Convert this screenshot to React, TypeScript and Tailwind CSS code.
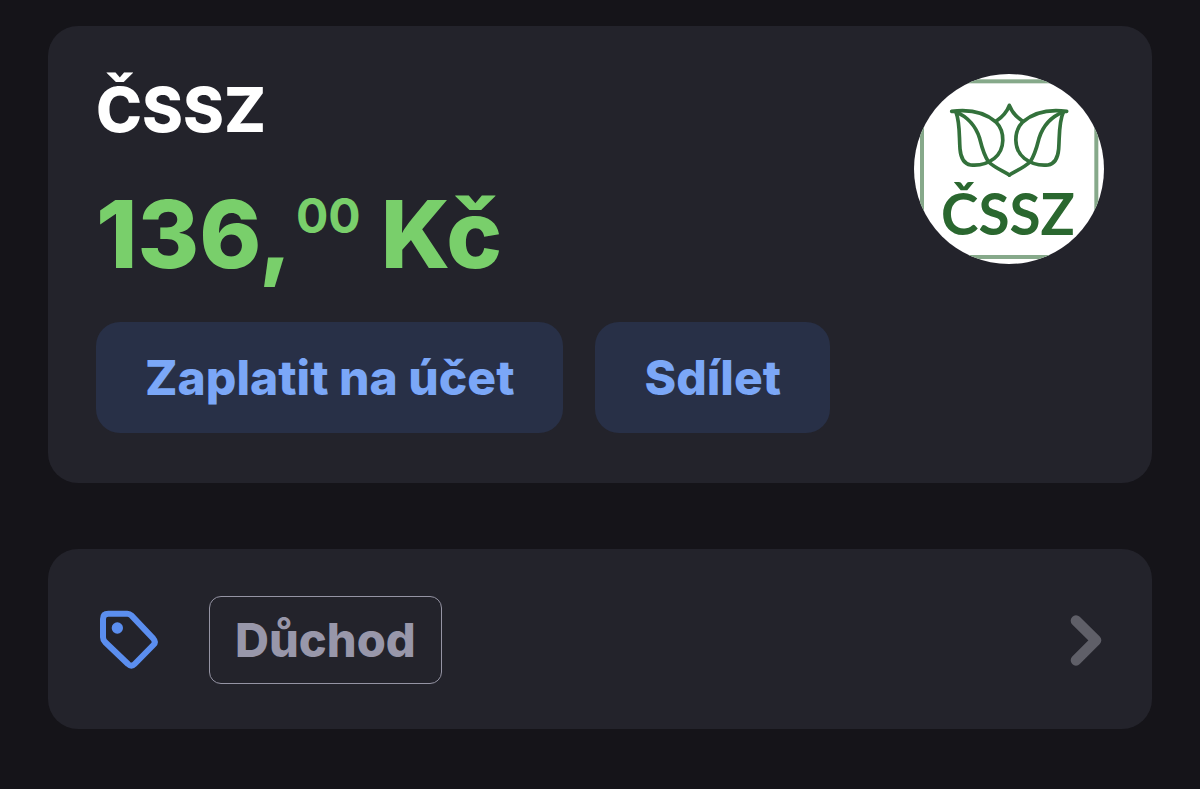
import React from 'react'

const actions = ['Zaplatit na účet', 'Sdílet']

function CsszLogo() {
  return (
    <svg
      viewBox="42 39 570 570"
      role="img"
      aria-label="ČSSZ"
      className="size-[190px] shrink-0 rounded-full bg-white"
    >
      <rect x="66" y="61" width="523" height="527" fill="none" stroke="#86a98a" strokeWidth="12" />
      <g fill="none" stroke="#33713b" strokeWidth="11" strokeLinejoin="round" strokeLinecap="round">
        {/* Left leaf */}
        <path d="M155 151 C215 143 258 157 288 183 C316 212 316 266 283 292 C262 308 240 315 212 312 C190 308 182 288 180 264 C177 220 180 185 168 153" />
        <path d="M168 153 C205 168 229 200 239 232 C245 256 251 282 266 303 C284 320 309 330 328 342" />
        {/* Right leaf */}
        <path d="M500 151 C441 143 398 157 368 183 C340 212 340 266 373 292 C394 308 416 315 444 312 C466 308 474 288 476 264 C479 220 476 185 490 153" />
        <path d="M490 153 C451 168 427 200 417 232 C411 256 405 282 390 303 C372 320 347 330 328 342" />
        {/* Bud */}
        <path d="M289 180 C307 168 321 152 328 133 C335 152 349 168 367 180" />
      </g>
      <text x="123" y="521" fontSize="170" className="fill-[#2a672f] font-['Lato',sans-serif] font-bold">
        ČSSZ
      </text>
    </svg>
  )
}

function TagIcon() {
  return (
    <svg viewBox="58 60 180 180" className="size-[60px] shrink-0" aria-hidden="true">
      <path
        d="M86 71 H143 Q150 71 155 76 L221 146 Q230 156 221 165 L165 222 Q155 232 145 222 L76 156 Q70 150 70 142 V87 Q70 71 86 71 Z"
        fill="none"
        stroke="#5b8eef"
        strokeWidth="18"
        strokeLinejoin="round"
      />
      <circle cx="113" cy="114" r="17" fill="#5b8eef" />
    </svg>
  )
}

function ChevronIcon() {
  return (
    <svg viewBox="60 55 96 159" className="h-[53px] w-8 shrink-0" aria-hidden="true">
      <path
        d="M78 75 L138 134 L78 194"
        fill="none"
        stroke="#5f5f68"
        strokeWidth="32"
        strokeLinecap="round"
        strokeLinejoin="round"
      />
    </svg>
  )
}

export default function App() {
  return (
    <main className="min-h-screen space-y-[66px] bg-[#151419] px-12 pt-[26px] pb-[60px] font-['Inter',sans-serif]">
      {/* Payment */}
      <section className="flex items-start justify-between rounded-[30px] bg-[#23232b] px-12 pt-12 pb-[50px]">
        <div>
          <h1 className="text-[62px] leading-[72px] font-extrabold text-white">ČSSZ</h1>
          <p className="mt-10 flex items-start text-[94px] leading-[96px] font-extrabold text-[#79cf6b]">
            <span>136,</span>
            <span className="ml-1 text-[48px] leading-[60px] font-bold">00</span>
            <span className="ml-5">Kč</span>
          </p>
          <div className="mt-10 flex gap-8">
            {actions.map((label) => (
              <button
                key={label}
                type="button"
                className="h-[111px] rounded-[24px] bg-[#283047] px-[49px] text-[48px] font-extrabold whitespace-nowrap text-[#7ba7f7]"
              >
                {label}
              </button>
            ))}
          </div>
        </div>
        <CsszLogo />
      </section>

      {/* Category */}
      <button
        type="button"
        className="flex h-[180px] w-full items-center rounded-[30px] bg-[#23232b] pt-0.5 pr-[50px] pl-12 text-left"
      >
        <span className="flex flex-1 items-center gap-[50px] pl-[3px]">
          <TagIcon />
          <span className="flex h-[88px] items-center rounded-xl border border-[#9594a4] px-[25px] text-[47px] font-extrabold text-[#9897aa]">
            Důchod
          </span>
        </span>
        <ChevronIcon />
      </button>
    </main>
  )
}
